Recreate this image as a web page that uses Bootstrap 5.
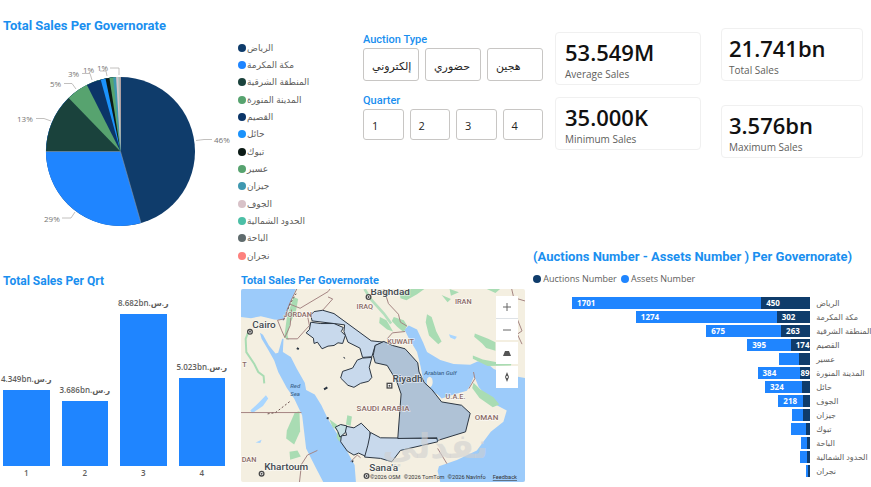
<!DOCTYPE html>
<html lang="en">
<head>
<meta charset="utf-8">
<meta name="viewport" content="width=device-width, initial-scale=1">
<title>Auction Sales Dashboard</title>
<link href="https://cdn.jsdelivr.net/npm/bootstrap@5.3.0/dist/css/bootstrap.min.css" rel="stylesheet">
<style>
  :root { --blue: #1f85ff; --navy: #0f3c6b; --title: #1a8fef; --ink: #605e5c; }
  body { font-family: "Open Sans", "Noto Sans", "DejaVu Sans", sans-serif; color: var(--ink); background: #fff; font-size: 9px; line-height: 12px; }
  .board { display: grid; grid-template-columns: minmax(0, 241fr) minmax(0, 120fr) minmax(0, 172fr) minmax(0, 22fr) minmax(0, 316fr); grid-template-rows: minmax(249px, auto) 24px auto; }
  .area-pie { grid-area: 1 / 1 / 3 / 3; }
  .area-filters { grid-area: 1 / 3 / 2 / 5; padding-left: 2px; }
  .area-kpi { grid-area: 1 / 5 / 2 / 6; }
  .area-quarters { grid-area: 3 / 1 / 4 / 2; padding-left: 3px; }
  .area-map { grid-area: 3 / 2 / 4 / 4; }
  .area-stack { grid-area: 2 / 4 / 4 / 6; }
  .viz-title { font-family: Roboto, sans-serif; font-weight: 700; font-size: 13px; line-height: 16px; color: var(--title); margin: 0; white-space: nowrap; }
  .viz-title-main { padding: 18px 0 0 3px; }
  .viz-title-mid { font-size: 12px; }
  .viz-title-sm { font-size: 11px; }
  .viz-title-slim { font-weight: 500; font-size: 11px; }
  .pie-box { flex: 238 1 0; min-width: 0; padding-top: 2px; }
  .legend-box { flex: 123 1 0; padding-top: 5px; }
  .legend-box li { display: flex; align-items: center; gap: 1px; height: 17px; margin-bottom: 0; white-space: nowrap; }
  .legend-box li:nth-child(3n) { height: 18px; }
  .dot { width: 8px; height: 8px; border-radius: 50%; flex: none; }
  .tile-row { gap: 6px; }
  .tile { background: #fff; border: 1px solid #c8c6c4; border-radius: 3px; color: #252423; text-align: left; padding: 2px 8px 0; font-size: 11px; line-height: 16px; min-width: 0; white-space: nowrap; }
  .tile-lg { height: 33px; flex: 1 1 0; }
  .tile-sm { height: 31px; flex: 1 1 0; }
  .kpi { border: 1px solid #f0f0f0; border-radius: 4px; height: 53px; padding: 6px 9px 0; }
  .kpi-tall { padding-left: 7px; }
  .kpi-value { font-size: 22px; line-height: 26px; font-weight: 600; color: #111; }
  .kpi-name { font-size: 10px; line-height: 18px; }
  .plot { height: 173px; gap: 12px; }
  .plot-col { flex: 1 1 0; min-width: 0; height: 100%; }
  .plot-col .fill { background: var(--blue); width: 100%; flex: none; }
  .plot-label { font-size: 8px; font-weight: 600; line-height: 14px; white-space: nowrap; }
  .plot-axis { gap: 12px; }
  .map-frame { position: relative; overflow: hidden; border-radius: 2px; }
  .map-tools { position: absolute; top: 7px; right: 7px; width: 22px; }
  .map-tools button { width: 22px; height: 22px; border: 0; padding: 0; background: #fff; display: flex; align-items: center; justify-content: center; }
  .map-tools .gap-top { margin-top: 2px; }
  .stack-row { height: 14px; }
  .stack-plot { flex: 1 1 0; min-width: 0; display: flex; justify-content: flex-end; height: 12px; }
  .seg { color: #fff; font-size: 8px; font-weight: 700; line-height: 12px; white-space: nowrap; overflow: hidden; flex: none; padding-left: 5px; }
  .seg-a { background: var(--blue); }
  .seg-b { background: var(--navy); }
  .seg-none { padding-left: 0; }
  .stack-name { flex: 0 0 18%; min-width: 0; padding-left: 6px; font-size: 8px; white-space: nowrap; }
</style>
<script src="https://cdn.jsdelivr.net/npm/bootstrap@5.3.0/dist/js/bootstrap.bundle.min.js"></script>
</head>
<body>
<main class="board">

  <section class="area-pie d-flex flex-column">
    <h2 class="viz-title viz-title-main">Total Sales Per Governorate</h2>
    <div class="d-flex">
      <div class="pie-box">
        <svg class="d-block" viewBox="0 0 238 200" width="100%" role="img" aria-label="Total sales share per governorate">
          <circle cx="120.500" cy="115.500" r="74.500" fill="#0f3c6b"/>
          <!-- each slice runs clockwise to the top and is covered by the next -->
          <path fill="#1f85ff" d="M120.500 115.500L141 187.100A74.500 74.500 0 1 1 120.500 41Z"/>
          <path fill="#1a423c" d="M120.500 115.500L46 115.500A74.500 74.500 0 0 1 120.500 41Z"/>
          <path fill="#57a36f" d="M120.500 115.500L68.700 61.900A74.500 74.500 0 0 1 120.500 41Z"/>
          <path fill="#0b3568" d="M120.500 115.500L86.900 49A74.500 74.500 0 0 1 120.500 41Z"/>
          <path fill="#1b92fb" d="M120.500 115.500L100.700 43.700A74.500 74.500 0 0 1 120.500 41Z"/>
          <path fill="#0b1a16" d="M120.500 115.500L105.500 42.500A74.500 74.500 0 0 1 120.500 41Z"/>
          <path fill="#57a36f" d="M120.500 115.500L109.400 41.800A74.500 74.500 0 0 1 120.500 41Z"/>
          <path fill="#3f98b0" d="M120.500 115.500L113.200 41.400A74.500 74.500 0 0 1 120.500 41Z"/>
          <path fill="#d3c4ca" d="M120.500 115.500L116.100 41.100A74.500 74.500 0 0 1 120.500 41Z"/>
          <path fill="#9fc8c0" d="M120.500 115.500L118.200 41A74.500 74.500 0 0 1 120.500 41Z"/>
          <path fill="#c98a90" d="M120.500 115.500L119.600 41H120.500Z"/>
          <path d="M46 115.500H120.500L141 187" fill="none" stroke="#8a93a0" stroke-width=".6"/>
          <g fill="none" stroke="#b3b0ad" stroke-width=".8">
            <path d="M196 104.500L204 103.500H212M75 176L71 182H62M51 85L44 82.500H36M76 53L72 47.500H64M92 44L90 37.500H82M107 40L106 35H100M119 39V32H110"/>
          </g>
          <g font-size="8" fill="#767472">
            <text x="214" y="107">46%</text><text x="44" y="186">29%</text><text x="17" y="86">13%</text>
            <text x="50" y="51">5%</text><text x="68" y="41">3%</text><text x="83" y="37">1%</text><text x="97" y="35">1%</text>
          </g>
        </svg>
      </div>
      <ul class="legend-box list-unstyled mb-0">
        <li><span class="dot" style="background:#0f3c6b"></span>الرياض</li>
        <li><span class="dot" style="background:#1f85ff"></span>مكة المكرمة</li>
        <li><span class="dot" style="background:#1a423c"></span>المنطقة الشرقية</li>
        <li><span class="dot" style="background:#57a36f"></span>المدينة المنورة</li>
        <li><span class="dot" style="background:#0b3568"></span>القصيم</li>
        <li><span class="dot" style="background:#1b92fb"></span>حائل</li>
        <li><span class="dot" style="background:#0b1a16"></span>تبوك</li>
        <li><span class="dot" style="background:#57a36f"></span>عسير</li>
        <li><span class="dot" style="background:#3f98b0"></span>جيزان</li>
        <li><span class="dot" style="background:#d8c2c8"></span>الجوف</li>
        <li><span class="dot" style="background:#4cbfa6"></span>الحدود الشمالية</li>
        <li><span class="dot" style="background:#5f6b6d"></span>الباحة</li>
        <li><span class="dot" style="background:#fd817e"></span>نجران</li>
      </ul>
    </div>
  </section>

  <section class="area-filters pt-4">
    <div class="pt-2">
      <h2 class="viz-title viz-title-slim">Auction Type</h2>
      <div class="d-flex tile-row pe-2 me-1">
        <button type="button" class="tile tile-lg">إلكتروني</button>
        <button type="button" class="tile tile-lg">حضوري</button>
        <button type="button" class="tile tile-lg">هجين</button>
      </div>
    </div>
    <div class="pt-2 mt-1">
      <h2 class="viz-title viz-title-slim">Quarter</h2>
      <div class="d-flex tile-row pe-2 me-1">
        <button type="button" class="tile tile-sm">1</button>
        <button type="button" class="tile tile-sm">2</button>
        <button type="button" class="tile tile-sm">3</button>
        <button type="button" class="tile tile-sm">4</button>
      </div>
    </div>
  </section>

  <section class="area-kpi d-flex pe-2 pt-4">
    <div class="col d-flex flex-column gap-2 pt-2 pe-2">
      <div class="kpi"><div class="kpi-value">53.549M</div><div class="kpi-name">Average Sales</div></div>
      <div class="kpi mt-1"><div class="kpi-value">35.000K</div><div class="kpi-name">Minimum Sales</div></div>
    </div>
    <div class="col d-flex flex-column gap-4 pt-1 ps-2">
      <div class="kpi kpi-tall ms-1"><div class="kpi-value">21.741bn</div><div class="kpi-name">Total Sales</div></div>
      <div class="kpi kpi-tall ms-1"><div class="kpi-value">3.576bn</div><div class="kpi-name">Maximum Sales</div></div>
    </div>
  </section>

  <section class="area-quarters">
    <h2 class="viz-title viz-title-mid">Total Sales Per Qrt</h2>
    <div class="plot d-flex pe-3 mt-1">
      <div class="plot-col d-flex flex-column justify-content-end align-items-center"><span class="plot-label mb-1">4.349bn.ر.س</span><div class="fill" style="height:44%"></div></div>
      <div class="plot-col d-flex flex-column justify-content-end align-items-center"><span class="plot-label mb-1">3.686bn.ر.س</span><div class="fill" style="height:37.500%"></div></div>
      <div class="plot-col d-flex flex-column justify-content-end align-items-center"><span class="plot-label mb-1">8.682bn.ر.س</span><div class="fill" style="height:88%"></div></div>
      <div class="plot-col d-flex flex-column justify-content-end align-items-center"><span class="plot-label mb-1">5.023bn.ر.س</span><div class="fill" style="height:51%"></div></div>
    </div>
    <div class="d-flex plot-axis plot-label text-center pe-3">
      <span class="col">1</span><span class="col">2</span><span class="col">3</span><span class="col">4</span>
    </div>
  </section>

  <section class="area-map">
    <h2 class="viz-title viz-title-sm">Total Sales Per Governorate</h2>
    <div class="map-frame me-2">
      <svg class="d-block" viewBox="0 0 855 582" width="100%" role="img" aria-label="Map of Saudi governorates">
        <rect width="855" height="582" fill="#f4efe1"/>
        <!-- seas -->
        <g fill="#9ccbfa">
          <path d="M0 0H165L150 40 140 72 128 94 100 92 60 82 30 88 0 84Z"/>
          <path d="M57 132L66 138 84 170 104 194 112 192 124 150 128 150 126 190 150 205 168 240 192 282 196 304 222 318 242 350 262 392 292 440 320 490 342 530 346 582 248 582 226 540 196 480 190 430 184 380 160 330 138 298 112 250 100 215 80 180 62 150Z"/>
          <path d="M492 122L505 110 530 122 548 160 560 190 600 214 640 226 690 228 712 218 732 216 760 240 800 258 855 268V582H600L592 548 596 534 650 515 710 486 752 430 790 400 800 366 770 350 740 322 716 296 702 262 690 290 680 306 640 318 604 330 590 316 566 304 548 270 540 230 530 190 506 150Z"/>
        </g>
        <ellipse cx="568" cy="280" rx="9" ry="16" fill="#f4efe1"/>
        <g fill="#a9d6ff">
          <path d="M75 320L82 330 66 352 34 374 28 366 54 342Z"/>
          <path d="M626 136L650 144 644 152 630 146ZM44 462l18-8-4 10z"/>
        </g>
        <!-- vegetation -->
        <g fill="#a9dcb3">
          <path d="M158 24l14 6-6 34-18 40-8 36 4 14-14-8 8-60z"/>
          <path d="M162 372l14-4 2 60-18 40-24-18 2-24z"/>
          <path d="M146 490l24-4 10 18-32 10zM320 380l14 4-4 28-14-4zM266 392l22 16 14 24-26-16z"/>
          <path d="M560 76l14 8 14 44 16 30-10 8-28-26-10-40zM478 12l34-12 40 0-22 16-32 18-18-6z"/>
          <path d="M460 84l30 10 10 16-10 20-20-16-16-18zM418 84l20 10 20 34-18-6-24-20z"/>
          <path d="M704 134l40 16 22 10 0 26-28-8-12-14-24-20zM698 200l30 12 50 10 40-6-6 14-70 2-44-22z"/>
          <path d="M700 282l20 20 40 24 18 22-20 8-40-28-22-30zM628 0l28 10-24 10zM604 18l28 12-10 10z"/>
          <path d="M740 0l40 0-14 12zM290 430l16 10-10 20-8-12z"/>
        </g>
        <path d="M24 124L14 150 16 190 40 226 52 250 68 262 70 284" fill="none" stroke="#a9dcb3" stroke-width="6"/>
        <path d="M372 0L390 30 430 74 452 104" fill="none" stroke="#b4dfbd" stroke-width="8"/>
        <!-- country borders -->
        <g fill="none" stroke="#a58583" stroke-width="3">
          <path d="M168 0L150 36 140 60 130 90 110 94 122 124 132 146 148 110 152 62 M148 46L178 58 262 8 268 0 M262 24L276 30 244 66 M244 66L200 80 206 110 186 132 170 150 136 150"/>
          <path d="M430 0L444 44 474 76 480 100 500 112 M440 150L456 132 494 128 M0 372H182"/>
          <path d="M230 486L200 500 182 528 176 582 M330 520L350 500 360 508M700 250L704 270 686 300 M592 480L620 526 M815 0l6 26 34 10M830 86l16 40-14 10 14 30"/>
        </g>
        <path d="M80 376l24-4 44-34M128 94l20-50 18-30" fill="none" stroke="#6d5450" stroke-width="3" stroke-dasharray="6 6"/>
        <!-- governorates -->
        <g stroke="#2b3541" stroke-width="3" stroke-linejoin="round">
          <g fill="#c8d9ec">
            <path d="M210 78L220 68 246 64 280 74 392 156 430 160 404 170 394 204 366 206 358 178 322 160 310 128 312 108 280 104 214 96Z"/>
            <path d="M196 132L206 122 210 100 240 104 280 104 308 116 302 128 314 140 306 164 292 162 280 170 262 172 244 180 230 160 220 164 218 148Z"/>
            <path d="M366 208L394 206 386 236 394 266 384 278 360 284 340 296 322 290 300 268 306 248 336 238 350 214Z"/>
            <path d="M310 412L340 418 362 404 388 430 390 460 376 504 354 494 340 500 320 488 300 460 302 442 318 440Z"/>
            <path d="M390 432L420 448 590 450 592 460 480 486 454 520 420 510 372 506 382 470Z"/>
            <path d="M284 416L300 408 318 412 314 432 298 446 292 430Z" fill="#c8e1e5"/>
          </g>
          <path fill="#afc2d6" d="M404 170L430 158 456 170 494 180 514 202 532 222 536 250 552 282 574 302 604 340 664 350 690 374 676 430 592 456 590 448 472 450 482 316 468 276 440 230 404 222 398 200Z"/>
          <path fill="none" d="M168 178l6 3M310 208l2-2M250 302l10-6M258 388l6 2M334 518l4 2" stroke-width="6"/>
        </g>
        <text x="744" y="510" text-anchor="end" direction="ltr" font-size="104" font-weight="700" fill="#d0d0d0" fill-opacity=".6">نفذلي</text>
        <!-- place names -->
        <g font-family="Roboto, sans-serif" fill="#444a50" stroke="#fff" stroke-width="4" stroke-opacity=".6" paint-order="stroke">
          <g font-size="30" font-weight="500">
            <text x="34" y="118">Cairo</text><text x="390" y="18">Baghdad</text><text x="456" y="281">Riyadh</text>
            <text x="70" y="544">Khartoum</text><text x="386" y="548">Sana'a</text>
          </g>
          <g font-size="22" font-weight="500" fill="#8a6a66">
            <text x="348" y="60">IRAQ</text><text x="644" y="46">IRAN</text><text x="128" y="84">JORDAN</text><text x="440" y="165">KUWAIT</text>
            <text x="348" y="366" font-size="24">SAUDI ARABIA</text><text x="616" y="330">U.A.E.</text><text x="704" y="394" font-size="24">OMAN</text><text x="4" y="236">T</text><text x="2" y="522">DAN</text>
          </g>
          <g font-size="18" font-style="italic" fill="#41688f" stroke="none" font-weight="500">
            <text x="148" y="298">Red</text><text x="148" y="322">Sea</text><text x="552" y="258">Arabian Gulf</text>
          </g>
        </g>
        <g fill="#fff" stroke="#4a4a4a" stroke-width="4">
          <circle cx="27" cy="129" r="7"/><circle cx="384" cy="24" r="7"/><circle cx="62" cy="556" r="7"/><circle cx="378" cy="563" r="7"/>
          <rect x="440" y="284" width="14" height="14"/>
        </g>
        <g fill="#4a4a4a"><circle cx="27" cy="129" r="3"/><circle cx="384" cy="24" r="3"/><circle cx="62" cy="556" r="3"/><circle cx="378" cy="563" r="3"/><circle cx="447" cy="291" r="3"/></g>
        <g font-family="Roboto, sans-serif" font-size="17" fill="#333">
          <text x="388" y="573">©2026 OSM</text><text x="490" y="573">©2026 TomTom</text><text x="622" y="573">©2026 NavInfo</text><text x="758" y="573" text-decoration="underline">Feedback</text>
        </g>
      </svg>
      <div class="map-tools">
        <button type="button" aria-label="Zoom in"><svg width="10" height="10" stroke="#666" fill="none"><path d="M5 1V9M1 5H9"/></svg></button>
        <button type="button" class="border-top" aria-label="Zoom out"><svg width="10" height="10" stroke="#666" fill="none"><path d="M1 5H9"/></svg></button>
        <button type="button" class="gap-top" aria-label="Change pitch"><svg width="8" height="8" fill="#555"><path d="M2 2H6L8 7H0Z"/></svg></button>
        <button type="button" class="gap-top" aria-label="Reset bearing"><svg width="8" height="12" fill="#555"><path d="M4 1L6 6 4 11 2 6Z"/><circle cx="4" cy="6" r="1" fill="#fff"/></svg></button>
      </div>
    </div>
  </section>

  <section class="area-stack">
    <h2 class="viz-title">(Auctions Number - Assets Number ) Per Governorate)</h2>
    <div class="d-flex align-items-center gap-1 pt-2 mb-2">
      <span class="d-flex align-items-center"><span class="dot" style="background:#0f3c6b"></span>&nbsp;Auctions Number</span>
      <span class="d-flex align-items-center"><span class="dot" style="background:#1f85ff"></span>&nbsp;Assets Number</span>
    </div>
    <div class="pt-1">
      <div class="stack-row d-flex"><div class="stack-plot"><span class="seg seg-a" style="width:68.200%">1701</span><span class="seg seg-b" style="width:17.700%">450</span></div><span class="stack-name">الرياض</span></div>
      <div class="stack-row d-flex"><div class="stack-plot"><span class="seg seg-a" style="width:50.800%">1274</span><span class="seg seg-b" style="width:12.100%">302</span></div><span class="stack-name">مكة المكرمة</span></div>
      <div class="stack-row d-flex"><div class="stack-plot"><span class="seg seg-a" style="width:27%">675</span><span class="seg seg-b" style="width:10.500%">263</span></div><span class="stack-name">المنطقة الشرقية</span></div>
      <div class="stack-row d-flex"><div class="stack-plot"><span class="seg seg-a" style="width:15.700%">395</span><span class="seg seg-b" style="width:7%">174</span></div><span class="stack-name">القصيم</span></div>
      <div class="stack-row d-flex"><div class="stack-plot"><span class="seg seg-a" style="width:6.900%"></span><span class="seg seg-b seg-none" style="width:4.200%"></span></div><span class="stack-name">عسير</span></div>
      <div class="stack-row d-flex"><div class="stack-plot"><span class="seg seg-a" style="width:15.500%">384</span><span class="seg seg-b seg-none" style="width:3.500%">89</span></div><span class="stack-name">المدينة المنورة</span></div>
      <div class="stack-row d-flex"><div class="stack-plot"><span class="seg seg-a" style="width:13.200%">324</span><span class="seg seg-b seg-none" style="width:3.100%"></span></div><span class="stack-name">حائل</span></div>
      <div class="stack-row d-flex"><div class="stack-plot"><span class="seg seg-a" style="width:8.800%">218</span><span class="seg seg-b seg-none" style="width:2.700%"></span></div><span class="stack-name">الجوف</span></div>
      <div class="stack-row d-flex"><div class="stack-plot"><span class="seg seg-a seg-none" style="width:4%"></span><span class="seg seg-b seg-none" style="width:2.500%"></span></div><span class="stack-name">جيزان</span></div>
      <div class="stack-row d-flex"><div class="stack-plot"><span class="seg seg-a seg-none" style="width:5.600%"></span><span class="seg seg-b seg-none" style="width:1.500%"></span></div><span class="stack-name">تبوك</span></div>
      <div class="stack-row d-flex"><div class="stack-plot"><span class="seg seg-a seg-none" style="width:2%"></span><span class="seg seg-b seg-none" style="width:1.300%"></span></div><span class="stack-name">الباحة</span></div>
      <div class="stack-row d-flex"><div class="stack-plot"><span class="seg seg-a seg-none" style="width:2.600%"></span><span class="seg seg-b seg-none" style="width:1.100%"></span></div><span class="stack-name">الحدود الشمالية</span></div>
      <div class="stack-row d-flex"><div class="stack-plot"><span class="seg seg-a seg-none" style="width:.8%"></span><span class="seg seg-b seg-none" style="width:.7%"></span></div><span class="stack-name">نجران</span></div>
    </div>
  </section>
</main>
</body>
</html>
